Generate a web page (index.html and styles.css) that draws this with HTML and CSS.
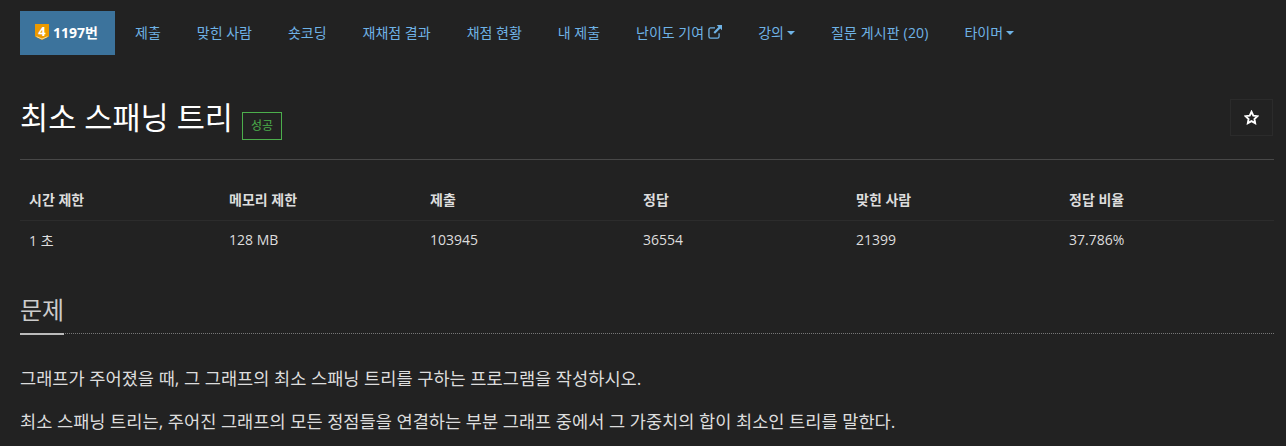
FILE: index.html
```html
<!doctype html>
<html lang="ko">
<head>
    <meta charset="utf-8">
    <title>최소 스패닝 트리</title>
    <link rel="stylesheet" href="styles.css">
</head>
<body>
    <nav class="tabs">
        <a class="tab active" href="#">
            <span class="tier"><svg width="14" height="17" viewBox="0 0 14 17"><path d="M0 0h14v12.500L7 16 0 12.500z" fill="#ec9a00"/><path d="M1.500 12.600 7 15l5.500-2.400" fill="none" stroke="#f7dc9f" stroke-width="1"/></svg><span class="tier-num">4</span></span>
            <span>1197번</span>
        </a>
        <a class="tab" href="#">제출</a>
        <a class="tab" href="#">맞힌 사람</a>
        <a class="tab" href="#">숏코딩</a>
        <a class="tab" href="#">재채점 결과</a>
        <a class="tab" href="#">채점 현황</a>
        <a class="tab" href="#">내 제출</a>
        <a class="tab" href="#">
            <span>난이도 기여</span>
            <svg class="ext" width="14" height="14" viewBox="0 0 12 12"><path d="M9.500 7v2.800a1.400 1.400 0 0 1-1.400 1.400H2.200A1.400 1.400 0 0 1 .8 9.800V3.900a1.400 1.400 0 0 1 1.400-1.400H6" fill="none" stroke="currentColor" stroke-width="1.100"/><path d="M7.500 0H12v4.500l-1.500-1.400L6 7.500 4.700 6.200 9 1.700z" fill="currentColor"/></svg>
        </a>
        <a class="tab" href="#">강의<span class="caret"></span></a>
        <a class="tab board" href="#">질문 게시판 (20)</a>
        <a class="tab" href="#">타이머<span class="caret"></span></a>
    </nav>

    <header class="page-header">
        <h1 class="title">최소 스패닝 트리</h1>
        <span class="label-ok">성공</span>
        <button class="star-btn" type="button">
            <svg width="15" height="15" viewBox="0 0 24 24"><path d="M12 2.800l2.900 6.100 6.700.9-4.900 4.600 1.200 6.600L12 17.800l-5.900 3.200 1.200-6.600-4.900-4.600 6.700-.9z" fill="none" stroke="#fff" stroke-width="3" stroke-linejoin="miter"/></svg>
        </button>
    </header>

    <table class="info">
        <thead>
            <tr>
                <th class="c1">시간 제한</th>
                <th class="c2">메모리 제한</th>
                <th class="c3">제출</th>
                <th class="c3">정답</th>
                <th class="c3">맞힌 사람</th>
                <th>정답 비율</th>
            </tr>
        </thead>
        <tbody>
            <tr>
                <td>1 초</td>
                <td>128 MB</td>
                <td>103945</td>
                <td>36554</td>
                <td>21399</td>
                <td>37.786%</td>
            </tr>
        </tbody>
    </table>

    <section class="problem">
        <div class="headline"><h2>문제</h2></div>
        <p>그래프가 주어졌을 때, 그 그래프의 최소 스패닝 트리를 구하는 프로그램을 작성하시오.</p>
        <p>최소 스패닝 트리는, 주어진 그래프의 모든 정점들을 연결하는 부분 그래프 중에서 그 가중치의 합이 최소인 트리를 말한다.</p>
    </section>
</body>
</html>
```

FILE: styles.css
```css
html, body {
    height: 446px;
    overflow: hidden;
}
body {
    margin: 0;
    padding: 11px 12px 0 20px;
    background: #222;
    color: #ddd;
    font-family: "Open Sans", "Noto Sans CJK KR", sans-serif;
    font-size: 14px;
}
a {
    text-decoration: none;
}
.tabs {
    display: flex;
    gap: 6px;
    height: 44px;
}
.tab {
    display: flex;
    align-items: center;
    padding: 0 15px 2px;
    color: #6fb3e6;
    font-size: 14px;
}
.tab.active {
    width: 95px;
    margin-right: -1px;
    box-sizing: border-box;
    background: #3c739c;
    color: #fff;
    font-weight: 700;
}
.tab.board {
    letter-spacing: .15px;
}
.tier {
    position: relative;
    display: inline-flex;
    margin-right: 4px;
}
.tier-num {
    position: absolute;
    top: 0;
    left: 0;
    width: 14px;
    text-align: center;
    color: #fff;
    font-size: 13px;
    line-height: 14px;
}
.ext {
    margin-left: 4px;
}
.caret {
    width: 0;
    height: 0;
    margin-left: 3px;
    margin-top: 2px;
    border-top: 4px solid currentColor;
    border-left: 4px solid transparent;
    border-right: 4px solid transparent;
}
.page-header {
    display: flex;
    align-items: flex-start;
    height: 62px;
    margin-top: 30px;
    padding-top: 12px;
    border-bottom: 1px solid #484848;
    position: relative;
}
.title {
    margin: 0;
    color: #fff;
    font-size: 30.600px;
    font-weight: 400;
    line-height: 40px;
}
.label-ok {
    margin-left: 9px;
    margin-top: 15px;
    width: 38px;
    height: 26px;
    line-height: 26px;
    text-align: center;
    border: 1px solid #4cae4c;
    color: #4cae4c;
    font-size: 12px;
}
.star-btn {
    position: absolute;
    right: 1px;
    top: 14px;
    width: 43px;
    height: 37px;
    background: #222;
    border: 1px solid #2b2b2b;
    padding: 0;
    display: flex;
    align-items: center;
    justify-content: center;
}
.info {
    width: 100%;
    margin-top: 20px;
    border-collapse: collapse;
    table-layout: fixed;
    font-size: 14px;
}
.info th, .info td {
    padding: 0 9px 2px;
    text-align: left;
}
.info th {
    height: 38px;
    border-bottom: 1px solid #2c2c2c;
    font-weight: 700;
}
.info td {
    height: 37px;
}
.c1 {
    width: 182px;
}
.c2 {
    width: 183px;
}
.c3 {
    width: 195px;
}
.headline {
    margin-top: 34px;
    border-bottom: 1px dotted #777;
}
.headline h2 {
    display: inline-block;
    vertical-align: top;
    margin: 0 0 -2px;
    padding-bottom: 7px;
    border-bottom: 2px solid #bbb;
    color: #ccc;
    font-size: 24px;
    font-weight: 400;
    line-height: 32px;
}
.problem p {
    margin: 19px 0 0;
    color: #ddd;
    font-size: 17.600px;
    line-height: 24px;
}
.headline + p {
    margin-top: 32px;
}
```
